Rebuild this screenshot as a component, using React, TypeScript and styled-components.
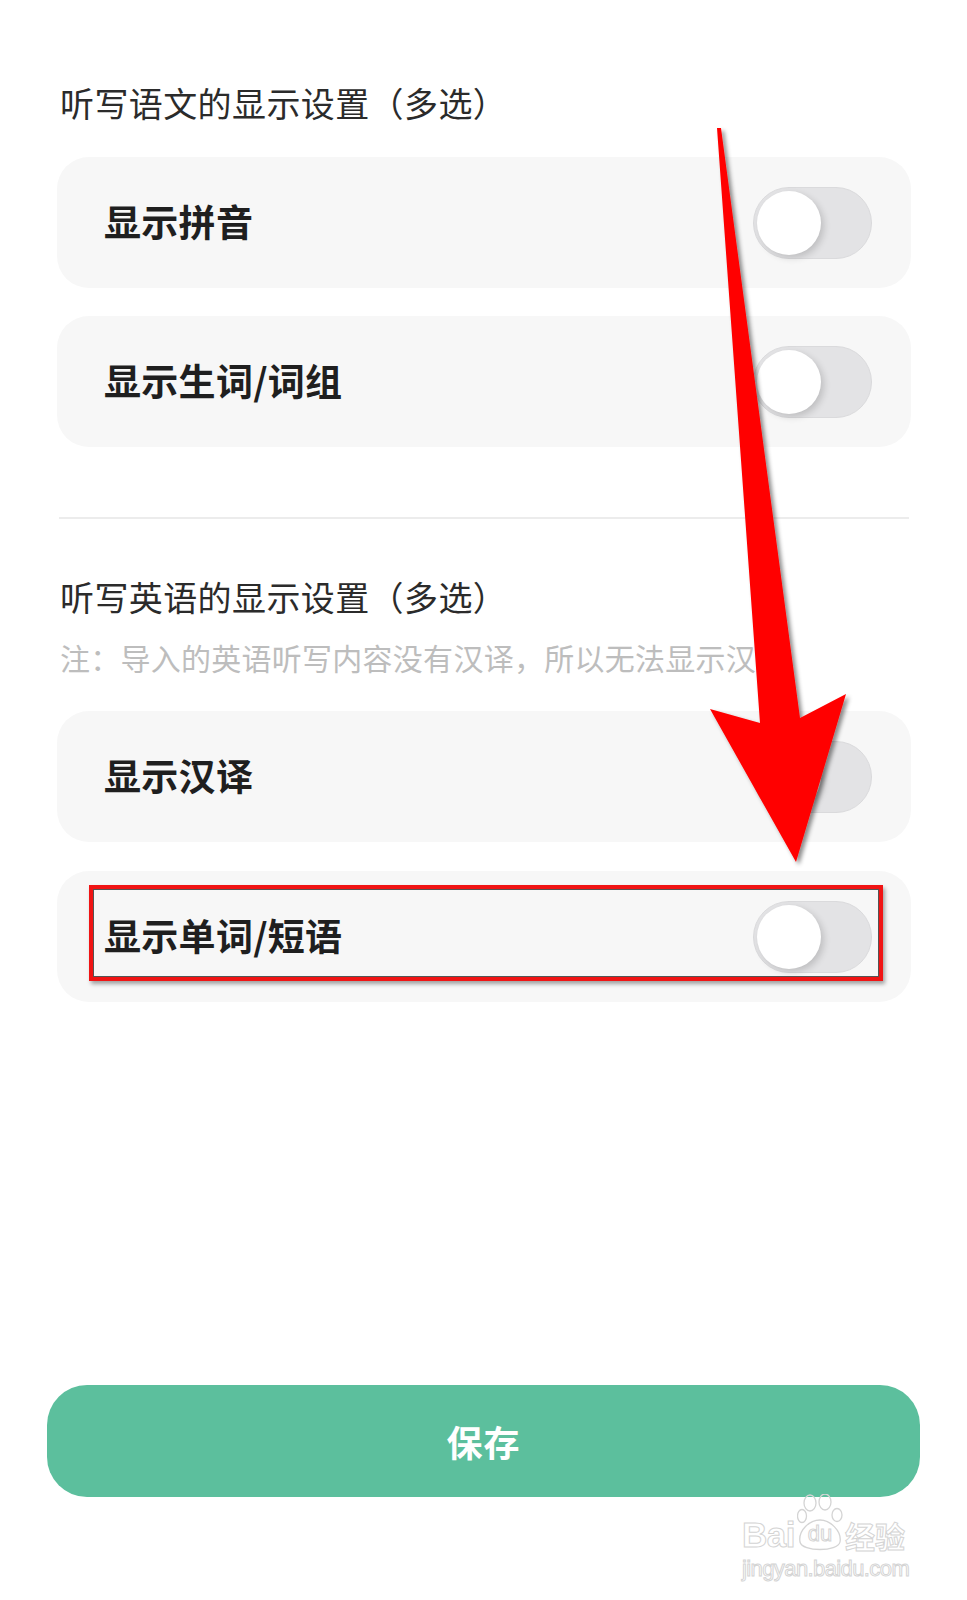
import React, { useState } from "react";
import styled, { createGlobalStyle } from "styled-components";

const GlobalStyle = createGlobalStyle`
    body {
        margin: 0;
        background: #ffffff;
        font-family: "Noto Sans CJK SC", "Noto Sans", sans-serif;
    }
`;

const Page = styled.div`
    position: relative;
    width: 967px;
    min-height: 1600px;
    display: flex;
    flex-direction: column;
    background: #fff;
    overflow: hidden;
`;

const Content = styled.div`
    display: flex;
    flex-direction: column;
    padding: 82px 56px 0 57px;
`;

const SectionTitle = styled.div<{ $top?: number }>`
    margin-top: ${(p) => p.$top ?? 0}px;
    padding-left: 3px;
    font-size: 34px;
    line-height: 42px;
    letter-spacing: 0.4px;
    color: #2b2b2b;
`;

const Note = styled.div`
    margin-top: 19px;
    padding-left: 3px;
    font-size: 30px;
    line-height: 40px;
    letter-spacing: 0.26px;
    color: #bdbdbd;
    white-space: nowrap;
`;

const Card = styled.div<{ $top: number }>`
    position: relative;
    margin-top: ${(p) => p.$top}px;
    height: 131px;
    box-sizing: border-box;
    padding: 0 39px 0 47px;
    display: flex;
    align-items: center;
    justify-content: space-between;
    background: #f7f7f7;
    border-radius: 32px;
`;

const Label = styled.span`
    font-size: 37px;
    font-weight: 700;
    color: #1f1f1f;
    letter-spacing: 0.3px;
    margin-top: -3px;
`;

const Track = styled.button<{ $on: boolean }>`
    position: relative;
    width: 119px;
    height: 72px;
    border: 1px solid #dadadc;
    border-radius: 36px;
    background: ${(p) => (p.$on ? "#5bbf9c" : "#e3e3e5")};
    cursor: pointer;
    display: flex;
    align-items: center;
    justify-content: ${(p) => (p.$on ? "flex-end" : "flex-start")};
    box-sizing: border-box;
    padding: 0 3px;
`;

const Knob = styled.span`
    width: 64px;
    height: 64px;
    border-radius: 50%;
    background: #ffffff;
    box-shadow: 3px 3px 7px rgba(0, 0, 0, 0.16);
`;

const Divider = styled.div`
    margin: 70px 2px 0 2px;
    height: 2px;
    background: #ececec;
`;

const Highlight = styled.div`
    position: absolute;
    left: 32px;
    top: 14px;
    width: 794px;
    height: 96px;
    box-sizing: border-box;
    border: 4px solid #f01414;
    box-shadow: inset 0 0 0 1px #555, 2px 3px 4px rgba(0, 0, 0, 0.35);
    pointer-events: none;
`;

const Footer = styled.div`
    margin-top: auto;
    padding: 0 47px 103px 47px;
`;

const SaveButton = styled.button`
    width: 100%;
    height: 112px;
    border: none;
    border-radius: 40px;
    background: #5cbf9d;
    color: #ffffff;
    font-family: "Noto Sans CJK SC", sans-serif;
    font-size: 36px;
    font-weight: 700;
    letter-spacing: 1px;
    cursor: pointer;
`;

const Overlay = styled.svg`
    position: absolute;
    left: 0;
    top: 0;
    pointer-events: none;
`;

const Watermark = styled.div`
    position: absolute;
    left: 742px;
    top: 1494px;
    width: 175px;
    display: flex;
    flex-direction: column;
    align-items: flex-start;
    color: transparent;
    -webkit-text-stroke: 1px #d4d4d4;
    pointer-events: none;
`;

const MarkRow = styled.div`
    display: flex;
    align-items: flex-end;
    height: 58px;
`;

const MarkLatin = styled.span`
    font-family: "Liberation Sans", sans-serif;
    font-weight: 700;
    font-size: 35px;
    line-height: 34px;
    letter-spacing: -0.5px;
`;

const MarkCjk = styled.span`
    font-family: "Noto Sans CJK SC", sans-serif;
    font-weight: 700;
    font-size: 30px;
    line-height: 34px;
    margin-left: 2px;
`;

const Paw = styled.span`
    position: relative;
    width: 46px;
    height: 58px;
    display: flex;
    align-items: flex-end;
    justify-content: center;
    margin-left: 2px;
`;

const PawText = styled.span`
    position: relative;
    font-family: "Liberation Sans", sans-serif;
    font-size: 22px;
    line-height: 28px;
    margin-bottom: 4px;
`;

const MarkSite = styled.div`
    margin-top: 6px;
    font-family: "Liberation Sans", sans-serif;
    font-size: 22px;
    line-height: 22px;
    letter-spacing: -0.6px;
`;

interface Option {
    id: string;
    label: string;
}

const chinese: Option[] = [
    { id: "pinyin", label: "显示拼音" },
    { id: "words", label: "显示生词/词组" },
];

const english: Option[] = [
    { id: "translation", label: "显示汉译" },
    { id: "phrase", label: "显示单词/短语" },
];

const Toggle: React.FC<{ on: boolean; onClick: () => void }> = ({
    on,
    onClick,
}) => (
    <Track $on={on} onClick={onClick}>
        <Knob />
    </Track>
);

const App: React.FC = () => {
    const [checked, setChecked] = useState<Record<string, boolean>>({});
    const flip = (id: string) =>
        setChecked((c) => ({ ...c, [id]: !c[id] }));

    return (
        <Page>
            <GlobalStyle />
            <Content>
                <SectionTitle>听写语文的显示设置（多选）</SectionTitle>
                {chinese.map((o, i) => (
                    <Card key={o.id} $top={i === 0 ? 33 : 28}>
                        <Label>{o.label}</Label>
                        <Toggle on={!!checked[o.id]} onClick={() => flip(o.id)} />
                    </Card>
                ))}
                <Divider />
                <SectionTitle $top={57}>听写英语的显示设置（多选）</SectionTitle>
                <Note>注：导入的英语听写内容没有汉译，所以无法显示汉译</Note>
                {english.map((o, i) => (
                    <Card key={o.id} $top={i === 0 ? 34 : 29}>
                        <Label>{o.label}</Label>
                        <Toggle on={!!checked[o.id]} onClick={() => flip(o.id)} />
                        {o.id === "phrase" && <Highlight />}
                    </Card>
                ))}
            </Content>
            <Footer>
                <SaveButton>保存</SaveButton>
            </Footer>

            {/* annotation arrow */}
            <Overlay width="967" height="1600" viewBox="0 0 967 1600">
                <defs>
                    <filter id="arrowShadow" x="-20%" y="-5%" width="140%" height="110%">
                        <feDropShadow dx="3" dy="3" stdDeviation="2" floodColor="#000" floodOpacity="0.45" />
                    </filter>
                </defs>
                <polygon
                    points="717,128 721,128 800,718 846,694 796,862 710,709 760,723"
                    fill="#ff0000"
                    filter="url(#arrowShadow)"
                />
            </Overlay>

            <Watermark>
                <MarkRow>
                    <MarkLatin>Bai</MarkLatin>
                    <Paw>
                        <svg
                            width="46"
                            height="58"
                            viewBox="0 0 46 58"
                            style={{ position: "absolute", left: 0, top: 0 }}
                        >
                            <g fill="none" stroke="#d4d4d4" strokeWidth="1.3">
                                <ellipse cx="13" cy="9" rx="6" ry="8" />
                                <ellipse cx="28" cy="8" rx="6" ry="8" />
                                <ellipse cx="40" cy="21" rx="5" ry="6.5" />
                                <ellipse cx="5" cy="22" rx="4.5" ry="6.5" />
                                <path d="M3 48 C1 36 13 26 23 26 C33 26 45 37 43 48 C41 58 5 58 3 48 Z" />
                            </g>
                        </svg>
                        <PawText>du</PawText>
                    </Paw>
                    <MarkCjk>经验</MarkCjk>
                </MarkRow>
                <MarkSite>jingyan.baidu.com</MarkSite>
            </Watermark>
        </Page>
    );
};

export default App;
